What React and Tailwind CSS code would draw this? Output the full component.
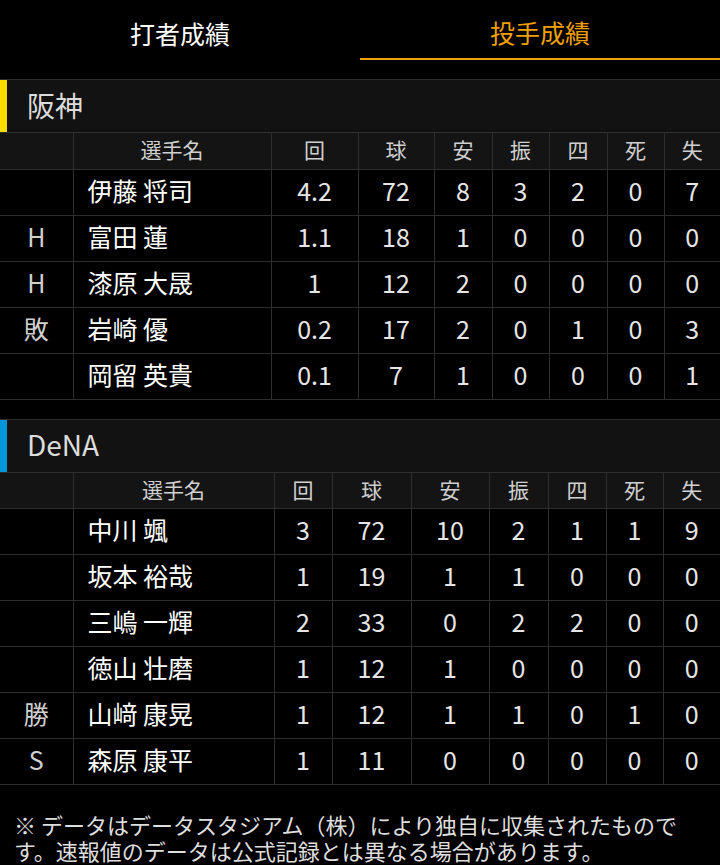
import React from "react";

const font = { fontFamily: '"Noto Sans CJK JP", "Noto Sans", sans-serif' };

const heads = ["回", "球", "安", "振", "四", "死", "失"];

const teams = [
  {
    name: "阪神",
    bar: "bg-[#ffdc00]",
    cols: [73, 198, 87, 76, 58, 57, 58, 57, 56],
    rows: [
      ["", "伊藤 将司", "4.2", "72", "8", "3", "2", "0", "7"],
      ["H", "富田 蓮", "1.1", "18", "1", "0", "0", "0", "0"],
      ["H", "漆原 大晟", "1", "12", "2", "0", "0", "0", "0"],
      ["敗", "岩崎 優", "0.2", "17", "2", "0", "1", "0", "3"],
      ["", "岡留 英貴", "0.1", "7", "1", "0", "0", "0", "1"],
    ],
  },
  {
    name: "DeNA",
    bar: "bg-[#0096dc]",
    cols: [73, 201, 58, 79, 78, 59, 58, 57, 57],
    rows: [
      ["", "中川 颯", "3", "72", "10", "2", "1", "1", "9"],
      ["", "坂本 裕哉", "1", "19", "1", "1", "0", "0", "0"],
      ["", "三嶋 一輝", "2", "33", "0", "2", "2", "0", "0"],
      ["", "徳山 壮磨", "1", "12", "1", "0", "0", "0", "0"],
      ["勝", "山﨑 康晃", "1", "12", "1", "1", "0", "1", "0"],
      ["S", "森原 康平", "1", "11", "0", "0", "0", "0", "0"],
    ],
  },
];

function TeamTable({ team }) {
  return (
    <section className="mt-[19px]">
      <div className="flex h-[54px] items-center border-t border-b border-[#2e2e2e] bg-[#121212]">
        <div className={`h-full w-[7px] ${team.bar}`} />
        <h2 className="pb-[3px] pl-[20px] text-[28px] text-[#dcdcdc] leading-none">{team.name}</h2>
      </div>
      <table className="w-full table-fixed border-collapse">
        <colgroup>
          {team.cols.map((w, i) => (
            <col key={i} style={{ width: w }} />
          ))}
        </colgroup>
        <thead>
          <tr className="h-[36px] bg-[#141414] text-[21px] text-[#cfcfcf]">
            <th className="border-r border-b border-[#2e2e2e] font-normal"></th>
            <th className="border-r border-b border-[#2e2e2e] pb-[2px] font-normal">選手名</th>
            {heads.map((h, i) => (
              <th
                key={h}
                className={`border-b border-[#2e2e2e] pb-[2px] font-normal ${i < heads.length - 1 ? "border-r" : ""}`}
              >
                {h}
              </th>
            ))}
          </tr>
        </thead>
        <tbody>
          {team.rows.map((r, ri) => (
            <tr key={ri} className="h-[46px] text-[25px]">
              <td className="border-r border-b border-[#2e2e2e] pb-[3px] text-center text-[#d0d0d0]">{r[0]}</td>
              <td className="border-r border-b border-[#2e2e2e] pb-[3px] pl-[14px] text-white">{r[1]}</td>
              {r.slice(2).map((v, i) => (
                <td
                  key={i}
                  className={`border-b border-[#2e2e2e] pb-[3px] text-center text-[#e6e6e6] ${i < 6 ? "border-r" : ""}`}
                >
                  {v}
                </td>
              ))}
            </tr>
          ))}
        </tbody>
      </table>
    </section>
  );
}

export default function App() {
  return (
    <div className="min-h-[865px] w-[720px] bg-black" style={font}>
      <div className="flex h-[60px]">
        <div className="flex flex-1 items-center justify-center pt-[8px] text-[25px] text-white">打者成績</div>
        <div className="flex flex-1 items-center justify-center border-b-2 border-[#f0a000] pt-[8px] text-[25px] text-[#f0a000]">
          投手成績
        </div>
      </div>
      {teams.map((t) => (
        <TeamTable key={t.name} team={t} />
      ))}
      <p className="pt-[26px] pl-[14px] pr-[30px] text-[22px] leading-[26px] text-[#dedede]">
        ※ データはデータスタジアム（株）により独自に収集されたものです。速報値のデータは公式記録とは異なる場合があります。
      </p>
    </div>
  );
}
